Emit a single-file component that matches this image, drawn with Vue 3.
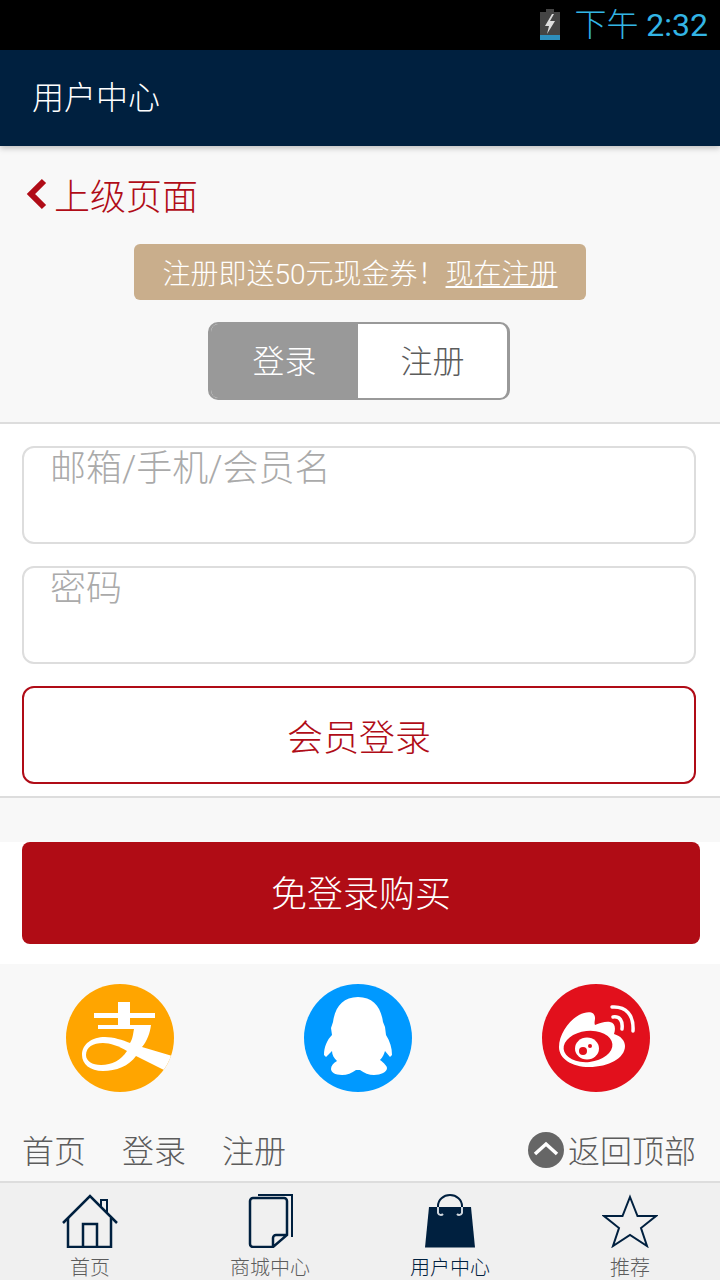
<template>
  <div class="page">
    <div class="status-bar">
      <svg class="battery" width="22" height="32" viewBox="0 0 22 32">
        <path d="M7 0h8v3h6v23H1V3h6z" fill="#444" />
        <rect x="1" y="26" width="20" height="5" fill="#2e8fbd" />
        <path d="M13 5L6 17h4l-2 8 8-13h-5l4-7z" fill="#ddd" />
      </svg>
      <span class="clock">下午 <b>2:32</b></span>
    </div>

    <header class="top-bar">用户中心</header>

    <section class="intro">
      <a class="back">
        <svg width="22" height="32" viewBox="0 0 22 32">
          <path d="M18 3L5 16l13 13" fill="none" stroke="#b00c17" stroke-width="6" />
        </svg>
        <span>上级页面</span>
      </a>
      <div class="promo">注册即送50元现金券！<u>现在注册</u></div>
      <div class="switch">
        <div class="switch-item on">登录</div>
        <div class="switch-item">注册</div>
      </div>
    </section>

    <section class="form">
      <div class="field">邮箱/手机/会员名</div>
      <div class="field">密码</div>
      <div class="submit">会员登录</div>
    </section>

    <div class="spacer"></div>

    <div class="quick-wrap">
      <div class="quick">免登录购买</div>
    </div>

    <section class="socials">
      <svg class="social" viewBox="0 0 108 108">
        <defs>
          <clipPath id="pay-clip"><circle cx="54" cy="54" r="54" /></clipPath>
        </defs>
        <circle cx="54" cy="54" r="54" fill="#ffa500" />
        <g clip-path="url(#pay-clip)">
          <path d="M52 18h12v11h25v5H64v7h21c-1 8-4 16-9 22l34 10-10 14-30-15c-7 10-20 15-33 15s-21-7-21-16c0-11 10-18 23-18 8 0 18 3 25 6 3-5 3-9 4-14H32v-4h20v-7H28v-5h24z" fill="#fff" />
          <path d="M37 59c-10 0-17 4-17 12 0 6 6 10 15 10 11 0 20-5 26-14-8-5-17-8-24-8z" fill="#ffa500" />
        </g>
      </svg>

      <svg class="social" viewBox="0 0 108 108">
        <circle cx="54" cy="54" r="54" fill="#0099ff" />
        <path d="M54 13c15 0 23 10 25 25l2 5 1 8c4 6 6 13 6 20l-2 2-5-6c-1 3-2 6-5 9 4 3 7 6 7 8 0 4-6 7-13 7-5 0-10-2-14-5h-4c-4 3-9 5-14 5-7 0-11-3-11-6 0-3 2-6 6-8-3-3-5-6-5-10l-6 6-2-2c0-8 3-15 8-20l-1-7 2-6c2-15 10-25 25-25z" fill="#fff" />
      </svg>

      <svg class="social" viewBox="0 0 108 108">
        <circle cx="54" cy="54" r="54" fill="#e2101c" />
        <path d="M17 63c0-12 9-26 20-32 8-4 16-4 16 3 0 3-1 5 0 7 5-2 11-4 15-3 5 1 6 6 4 12 7 2 11 7 11 12 0 12-16 21-36 21-17 0-30-8-30-20z" fill="#fff" />
        <ellipse cx="46" cy="62.500" rx="24.500" ry="15.500" transform="rotate(-6 46 62.500)" fill="#e2101c" />
        <ellipse cx="45" cy="64.500" rx="12" ry="11" fill="#fff" />
        <circle cx="41" cy="67" r="4" fill="#e2101c" />
        <circle cx="48" cy="62" r="2" fill="#e2101c" />
        <path d="M70 23c14-1 22 8 21 24M71 33c7-1 10 4 9 12" fill="none" stroke="#fff" stroke-width="3.500" stroke-linecap="round" />
      </svg>
    </section>

    <footer class="links">
      <a>首页</a>
      <a>登录</a>
      <a>注册</a>
      <a class="to-top">
        <svg width="36" height="36" viewBox="0 0 36 36">
          <circle cx="18" cy="18" r="18" fill="#666" />
          <path d="M7 22l11-10 11 10" fill="none" stroke="#fff" stroke-width="3.500" />
        </svg>
        <span>返回顶部</span>
      </a>
    </footer>

    <nav class="tabs">
      <div v-for="tab in tabs" :key="tab.name" class="tab" :class="{ active: tab.active }">
        <svg class="tab-icon" width="56" height="54" viewBox="0 0 56 54" fill="none" stroke="#00203f" stroke-width="2.500">
          <template v-if="tab.icon === 'home'">
            <path d="M1 29L28 2l27 27" />
            <path d="M6 24v29h43V24M21 53V30h14v23" />
            <path d="M39 12V6h6v12" stroke-width="2" />
          </template>
          <template v-else-if="tab.icon === 'doc'">
            <path d="M16 1h34v42" stroke-width="2" />
            <path d="M45 41V7a3 3 0 0 0-3-3H11a3 3 0 0 0-3 3v43a3 3 0 0 0 3 3h20zM45 41H34a3 3 0 0 0-3 3v9" />
          </template>
          <template v-else-if="tab.icon === 'bag'">
            <path d="M7 13h42l4 40.500H3z" fill="#00203f" stroke="none" />
            <path d="M16 13v-1a12 11 0 0 1 24 0v1" stroke-width="2" />
            <path d="M16 13v6a3 3 0 0 0 5 1M40 13v6a3 3 0 0 1-5 1" stroke="#cfd6dd" stroke-width="2" />
          </template>
          <template v-else>
            <path d="M28 3l7.500 19H54L39 34l6 18-17-11-17 11 6-18L2 22h18.500z" stroke-width="2" />
          </template>
        </svg>
        <span>{{ tab.name }}</span>
      </div>
    </nav>
  </div>
</template>

<script setup>
const tabs = [
  { name: '首页', icon: 'home' },
  { name: '商城中心', icon: 'doc' },
  { name: '用户中心', icon: 'bag', active: true },
  { name: '推荐', icon: 'star' }
]
</script>

<style>
html,
body {
  margin: 0;
  background: #f8f8f8;
}
</style>

<style scoped>
.page {
  width: 720px;
  height: 1280px;
  overflow: hidden;
  background: #f8f8f8;
  font-family: Roboto, "Noto Sans CJK SC", sans-serif;
  font-weight: 300;
  color: #5c5c5c;
}

.status-bar {
  height: 50px;
  box-sizing: border-box;
  background: #000;
  display: flex;
  align-items: center;
  justify-content: flex-end;
  padding-right: 12px;
}

.battery {
  margin-right: 13px;
}

.clock {
  font-size: 32px;
  line-height: 50px;
  color: #33b5e5;
}

.clock b {
  font-weight: 400;
}

.top-bar {
  height: 96px;
  box-sizing: border-box;
  padding-left: 32px;
  background: #00203f;
  color: #fff;
  font-size: 32px;
  line-height: 96px;
  box-shadow: 0 2px 6px rgba(0, 0, 0, 0.25);
  position: relative;
}

.intro {
  height: 278px;
  box-sizing: border-box;
  padding-top: 22px;
  display: flex;
  flex-direction: column;
  align-items: center;
  border-bottom: 2px solid #ddd;
}

.back {
  align-self: flex-start;
  margin-left: 26px;
  height: 52px;
  display: flex;
  align-items: center;
  gap: 6px;
  font-size: 36px;
  color: #b00c17;
}

.promo {
  margin-top: 24px;
  width: 452px;
  height: 56px;
  box-sizing: border-box;
  background: #c9ae8c;
  border-radius: 6px;
  color: #fff;
  font-size: 28px;
  line-height: 62px;
  text-align: center;
}

.switch {
  margin: 22px 0 0 -2px;
  width: 302px;
  height: 78px;
  box-sizing: border-box;
  display: flex;
  border: solid #999;
  border-width: 2px 3px 2px 3px;
  border-radius: 10px;
  background: #fff;
  overflow: hidden;
}

.switch-item {
  flex: 1;
  font-size: 32px;
  line-height: 76px;
  text-align: center;
}

.switch-item.on {
  flex: none;
  width: 147px;
  background: #999;
  color: #fff;
}

.form {
  height: 374px;
  box-sizing: border-box;
  padding: 22px 24px 0 22px;
  display: flex;
  flex-direction: column;
  gap: 22px;
  background: #fff;
  border-bottom: 2px solid #ddd;
}

.field {
  height: 98px;
  box-sizing: border-box;
  padding-left: 26px;
  border: 2px solid #ddd;
  border-radius: 12px;
  font-size: 36px;
  line-height: 42px;
  color: #aaa;
}

.submit {
  height: 98px;
  box-sizing: border-box;
  border: 2px solid #b00c17;
  border-radius: 12px;
  color: #b00c17;
  font-size: 36px;
  line-height: 102px;
  text-align: center;
}

.spacer {
  height: 44px;
}

.quick-wrap {
  height: 122px;
  box-sizing: border-box;
  padding: 0 20px 0 22px;
  background: #fff;
}

.quick {
  height: 102px;
  background: #b00c15;
  border-radius: 8px;
  color: #fff;
  font-size: 36px;
  line-height: 106px;
  text-align: center;
}

.socials {
  height: 128px;
  box-sizing: border-box;
  padding: 20px 4px 0 0;
  display: flex;
  justify-content: center;
  gap: 130px;
}

.social {
  width: 108px;
  height: 108px;
}

.links {
  height: 89px;
  box-sizing: border-box;
  padding: 24px 24px 0 22px;
  display: flex;
  align-items: center;
  gap: 36px;
  font-size: 32px;
}

.to-top {
  margin-left: auto;
  display: flex;
  align-items: center;
  gap: 4px;
}

.to-top svg {
  margin-top: 3px;
}

.tabs {
  height: 99px;
  box-sizing: border-box;
  display: flex;
  background: #f0f0f0;
  border-top: 2px solid #ddd;
}

.tab {
  flex: 1;
  display: flex;
  flex-direction: column;
  align-items: center;
  padding-top: 11px;
  font-size: 20px;
  line-height: 28px;
}

.tab.active {
  color: #00203f;
}

.tab-icon {
  display: block;
  flex-shrink: 0;
  margin-bottom: 6px;
}
</style>
